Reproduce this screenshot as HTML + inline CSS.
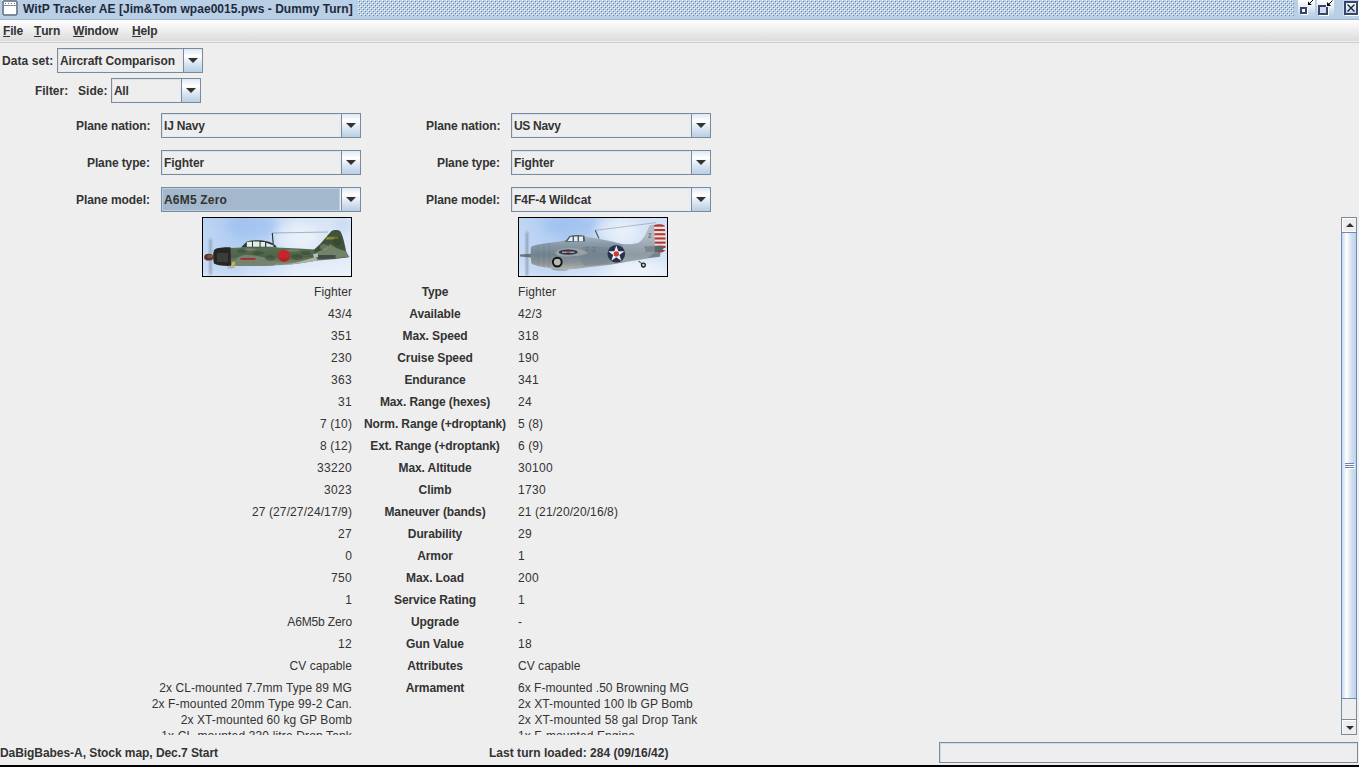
<!DOCTYPE html>
<html>
<head>
<meta charset="utf-8">
<title>WitP Tracker AE</title>
<style>
*{box-sizing:border-box;margin:0;padding:0}
html,body{width:1359px;height:767px;overflow:hidden;background:#eeeeee}
body{position:relative;font-family:"Liberation Sans",sans-serif;font-size:12px;color:#333333;line-height:14px}
.abs{position:absolute}
b,.b{font-weight:bold}
/* title bar */
#title{position:absolute;left:0;top:0;width:1359px;height:20px;background:#b8cfe5;border-bottom:1px solid #9fb4cd}
#title .txt{position:absolute;left:23px;top:2px;font-weight:bold;font-size:12px;line-height:14px;color:#1e2a3c;white-space:nowrap;letter-spacing:0.043px}
#bumps{position:absolute;left:358px;top:0;width:936px;height:16px}
/* menu */
#menu{position:absolute;left:0;top:20px;width:1359px;height:23px;background:linear-gradient(#ffffff 0px,#dcdcdc 21px,#eeeeee 21px,#eeeeee 22px);border-bottom:1px solid #cccccc}
#menu span{position:absolute;top:4px;font-weight:bold;white-space:nowrap;letter-spacing:-0.15px}
#menu u{text-decoration:none;display:inline-block;position:relative}
#menu u:after{content:"";position:absolute;left:0;right:0;top:12px;height:1px;background:#333}
/* labels */
.lbl{position:absolute;font-weight:bold;white-space:nowrap;line-height:14px}
/* combo */
.combo{position:absolute;height:25px;border:1px solid #7a8a99;background:#eeeeee}
.combo .in{position:absolute;left:0;top:0;right:20px;bottom:0;border:1px solid #d6e3f1;border-right-color:#e3ebf4;border-bottom-color:#e3ebf4}
.combo.sel .in{background:#a3b8cc;border-color:#b8cfe5}
.combo .t{position:absolute;left:2px;top:5px;font-weight:bold;white-space:nowrap;line-height:14px}
.combo .btn{position:absolute;right:0;top:0;width:19px;bottom:0;border-left:1px solid #7a8a99;background:linear-gradient(#dde8f3 0%,#ffffff 30%,#dde8f3 60%,#b8cfe5 100%)}
.combo .btn svg{position:absolute;left:4px;top:9px}
/* data rows */
.row{position:absolute;left:0;width:1340px;height:22px;line-height:22px;white-space:nowrap}
.l{position:absolute;right:988px;text-align:right;white-space:nowrap}
.c{position:absolute;left:335px;width:200px;text-align:center;font-weight:bold;white-space:nowrap}
.r{position:absolute;left:518px;white-space:nowrap}
.row.arm{height:16px;line-height:16px}
#view{position:absolute;left:0;top:212px;width:1340px;height:523px;overflow:hidden}
.pic{position:absolute;width:150px;height:60px;border:1px solid #000;overflow:hidden}
</style>
</head>
<body>
<div id="title">
  <svg class="abs" style="left:2px;top:0" width="16" height="16" viewBox="0 0 16 16"><rect x="0" y="0" width="16" height="16" fill="#7a8a99"/><rect x="2" y="2" width="12" height="12" fill="#fff"/><rect x="2" y="5" width="12" height="1" fill="#7a8a99"/><rect x="3" y="3" width="1" height="1" fill="#5f6f80"/><rect x="6" y="3" width="1" height="1" fill="#5f6f80"/><rect x="9" y="3" width="1" height="1" fill="#5f6f80"/><rect x="12" y="3" width="1" height="1" fill="#5f6f80"/><rect x="0" y="0" width="1" height="1" fill="#e8eef6"/><rect x="15" y="0" width="1" height="1" fill="#e8eef6"/><rect x="0" y="15" width="1" height="1" fill="#e8eef6"/><rect x="15" y="15" width="1" height="1" fill="#e8eef6"/></svg>
  <div class="txt">WitP Tracker AE [Jim&amp;Tom wpae0015.pws - Dummy Turn]</div>
  <svg id="bumps" width="936" height="16"><defs><pattern id="bp" x="0" y="0" width="4" height="4" patternUnits="userSpaceOnUse"><rect x="0" y="0" width="1" height="1" fill="#ffffff"/><rect x="1" y="1" width="1" height="1" fill="#6a84aa"/><rect x="2" y="2" width="1" height="1" fill="#ffffff"/><rect x="3" y="3" width="1" height="1" fill="#6a84aa"/></pattern></defs><rect width="936" height="16" fill="url(#bp)"/></svg>
  <svg class="abs" style="left:1296px;top:0" width="63" height="19" viewBox="1296 0 63 19">
    <defs><linearGradient id="tg" x1="0" y1="0" x2="0" y2="1"><stop offset="0" stop-color="#ffffff"/><stop offset="0.45" stop-color="#e4edf6"/><stop offset="1" stop-color="#b8cfe5"/></linearGradient></defs>
    <rect x="1298" y="0" width="17" height="16" fill="url(#tg)"/>
    <rect x="1317" y="0" width="17" height="16" fill="url(#tg)"/>
    <rect x="1301" y="8" width="7" height="7" fill="#ffffff"/>
    <rect x="1300" y="7" width="7" height="7" fill="#36456a"/>
    <rect x="1302" y="9" width="3" height="3" fill="#f4f7fb"/>
    <path d="M1308 1.5 V5 H1311.8 Z" fill="#000"/><path d="M1309.5 3.5 L1313 0" stroke="#000" stroke-width="1" fill="none"/>
    <rect x="1319" y="15" width="10" height="1" fill="#ffffff"/><rect x="1328" y="8" width="1" height="8" fill="#ffffff"/>
    <rect x="1320" y="7" width="6" height="6" fill="#d6dcee"/>
    <path d="M1318 5 H1326 V7 H1320 V13 H1326 V7 H1328 V15 H1318 Z" fill="#36456a"/>
    <path d="M1327 2 V6 H1331.2 Z" fill="#000"/><path d="M1328.5 4.5 L1332.5 0.5" stroke="#000" stroke-width="1" fill="none"/>
    <rect x="1343" y="1" width="16" height="15" fill="#dfe9f4" opacity="0.6"/>
    <rect x="1345" y="2" width="14" height="14" fill="#ffffff"/>
    <rect x="1345" y="2" width="12" height="12" fill="url(#tg)" stroke="#36456a" stroke-width="2"/>
    <path d="M1347.5 4.5 L1354.5 11.5 M1354.5 4.5 L1347.5 11.5" stroke="#161f36" stroke-width="1.3" fill="none"/>
  </svg>
</div>
<div id="menu">
  <span style="left:3px"><u>F</u>ile</span>
  <span style="left:34px"><u>T</u>urn</span>
  <span style="left:73px"><u>W</u>indow</span>
  <span style="left:132px"><u>H</u>elp</span>
</div>

<div class="lbl" style="left:2px;top:54px;letter-spacing:0.075px">Data set:</div>
<div class="combo" style="left:57px;top:48px;width:146px"><div class="in"></div><div class="t" style="letter-spacing:-0.056px">Aircraft Comparison</div><div class="btn"><svg width="10" height="5"><path d="M0 0H10L5 5Z" fill="#333"/></svg></div></div>

<div class="lbl" style="left:35px;top:84px;letter-spacing:-0.033px">Filter:</div>
<div class="lbl" style="left:78px;top:84px;letter-spacing:0.05px">Side:</div>
<div class="combo" style="left:111px;top:78px;width:90px"><div class="in"></div><div class="t" style="letter-spacing:-0.3px">All</div><div class="btn"><svg width="10" height="5"><path d="M0 0H10L5 5Z" fill="#333"/></svg></div></div>

<div class="lbl" style="left:76px;top:119px;letter-spacing:-0.063px">Plane nation:</div>
<div class="combo" style="left:161px;top:113px;width:200px"><div class="in"></div><div class="t" style="letter-spacing:-0.167px">IJ Navy</div><div class="btn"><svg width="10" height="5"><path d="M0 0H10L5 5Z" fill="#333"/></svg></div></div>
<div class="lbl" style="left:87px;top:156px;letter-spacing:-0.11px">Plane type:</div>
<div class="combo" style="left:161px;top:150px;width:200px"><div class="in"></div><div class="t" style="letter-spacing:-0.067px">Fighter</div><div class="btn"><svg width="10" height="5"><path d="M0 0H10L5 5Z" fill="#333"/></svg></div></div>
<div class="lbl" style="left:76px;top:193px;letter-spacing:-0.071px">Plane model:</div>
<div class="combo sel" style="left:161px;top:187px;width:200px"><div class="in"></div><div class="t" style="letter-spacing:0.2px">A6M5 Zero</div><div class="btn"><svg width="10" height="5"><path d="M0 0H10L5 5Z" fill="#333"/></svg></div></div>

<div class="lbl" style="left:426px;top:119px;letter-spacing:-0.063px">Plane nation:</div>
<div class="combo" style="left:511px;top:113px;width:200px"><div class="in"></div><div class="t" style="letter-spacing:-0.3px">US Navy</div><div class="btn"><svg width="10" height="5"><path d="M0 0H10L5 5Z" fill="#333"/></svg></div></div>
<div class="lbl" style="left:437px;top:156px;letter-spacing:-0.11px">Plane type:</div>
<div class="combo" style="left:511px;top:150px;width:200px"><div class="in"></div><div class="t" style="letter-spacing:-0.067px">Fighter</div><div class="btn"><svg width="10" height="5"><path d="M0 0H10L5 5Z" fill="#333"/></svg></div></div>
<div class="lbl" style="left:426px;top:193px;letter-spacing:-0.071px">Plane model:</div>
<div class="combo" style="left:511px;top:187px;width:200px"><div class="in"></div><div class="t" style="letter-spacing:-0.05px">F4F-4 Wildcat</div><div class="btn"><svg width="10" height="5"><path d="M0 0H10L5 5Z" fill="#333"/></svg></div></div>

<div id="view">
  <div class="pic" id="pic1" style="left:202px;top:5px;background:#bcd4f0"><svg class="abs" style="left:0;top:0" width="148" height="58" viewBox="1 1 148 58">
<defs>
<linearGradient id="sk1" x1="0" y1="0" x2="1" y2="0"><stop offset="0" stop-color="#bcd4f3"/><stop offset="0.25" stop-color="#a9c8f1"/><stop offset="0.42" stop-color="#b3cff3"/><stop offset="0.62" stop-color="#d3e2f6"/><stop offset="1" stop-color="#dde8f6"/></linearGradient>
<linearGradient id="sk1b" x1="0" y1="0" x2="0" y2="1"><stop offset="0" stop-color="#fff" stop-opacity="0"/><stop offset="0.65" stop-color="#fff" stop-opacity="0.12"/><stop offset="1" stop-color="#fff" stop-opacity="0.5"/></linearGradient>
<linearGradient id="zf" x1="0" y1="0" x2="0" y2="1"><stop offset="0" stop-color="#5a6f53"/><stop offset="0.5" stop-color="#4e6348"/><stop offset="1" stop-color="#8a9585"/></linearGradient>
<filter id="bl1" x="-5%" y="-5%" width="110%" height="110%"><feGaussianBlur stdDeviation="0.45"/></filter>
<filter id="bl3" x="-30%" y="-30%" width="160%" height="160%"><feGaussianBlur stdDeviation="4"/></filter>
<filter id="bl2" x="-150%" y="-10%" width="400%" height="120%"><feGaussianBlur stdDeviation="0.8 1.5"/></filter>
</defs>
<rect x="0" y="0" width="150" height="60" fill="url(#sk1)"/>
<rect x="0" y="0" width="150" height="60" fill="url(#sk1b)"/>
<g filter="url(#bl3)"><ellipse cx="50" cy="9" rx="26" ry="11" fill="#9bbdee" opacity="0.55"/><ellipse cx="95" cy="20" rx="22" ry="15" fill="#ffffff" opacity="0.4"/><ellipse cx="142" cy="8" rx="10" ry="8" fill="#b9d2f2" opacity="0.5"/><ellipse cx="20" cy="52" rx="22" ry="7" fill="#b5cff2" opacity="0.5"/></g>
<g filter="url(#bl1)">
<!-- antenna wire & mast -->
<path d="M70.5 16 L126 15" stroke="#4a5a58" stroke-width="0.4" fill="none"/>
<path d="M70.3 16 L71.2 27" stroke="#22302f" stroke-width="1.1" fill="none"/>
<!-- fuselage -->
<path d="M28 31 C40 30 60 30 74 30.5 C90 31 104 32 112 32.5 L113 36 L147 40 L134 42 L116 43.5 C106 45 98 46.5 88 47.5 C70 49 45 49 28 48.5 Z" fill="url(#zf)"/>
<!-- fin -->
<path d="M111.5 33 C118 28 124 20 129 14.5 C132 12.5 136 12.8 138.5 14.5 C141 19 143 28 144 34 C145 37 146.5 39 147.5 40 L140 41 L113 37 Z" fill="#3f5238"/>
<path d="M113 36 C120 33 126 30 128 27 C132 30 136 32 143.5 34 L147 40 L134 41 L116 40 Z" fill="#6f8268"/>
<path d="M124.5 20 L136 19.5 L136.5 22 L124 22.8 Z" fill="#8a8a3a"/>
<!-- stabilizer -->
<path d="M113 38 L133.5 38 L133.5 41.5 L117 42 Z" fill="#454b46"/>
<path d="M111 37 L116 36.5 L116 40 L112 41 Z" fill="#b9c0b6"/>
<!-- underside light -->
<path d="M88 47.6 C98 46.5 106 45 116 43.4 L113.5 40 C104 42.5 96 45.5 86 47 Z" fill="#a9b2a6"/>
<!-- canopy -->
<path d="M39 30.6 L45 24.2 C52 22.6 60 23 66 24.5 C70 25.6 73.5 27.8 75 30.6 Z" fill="#2c3a33"/>
<path d="M44.8 29.8 V24.8 H50 V29.8 Z M51 29.8 V24.6 H57.5 V29.8 Z M58.6 29.8 V25 H63 V29.8 Z M64.2 29.8 V25.8 L71.5 28.6 V29.8 Z" fill="#e7ebe8"/>
<!-- cowl -->
<path d="M12 33 C14 31 20 30 28.5 30.3 L29 48.8 C22 49.2 15 48.5 12 46.5 C10.8 42 10.8 37 12 33 Z" fill="#252726"/>
<path d="M15 36 H26 V45 H15 Z" fill="#454845" opacity="0.7"/>
<!-- spinner -->
<ellipse cx="6.8" cy="40.2" rx="4.6" ry="3.4" fill="#5f3326"/>
<ellipse cx="8" cy="39.4" rx="3" ry="1.4" fill="#9a6a52" opacity="0.7"/>
<!-- wing -->
<path d="M31 47 C33 42 37 38.5 43 38 C55 37.6 66 40.5 74 45.5 L72 48.5 C60 49.2 45 49.2 31 48.8 Z" fill="#74826f"/>
<path d="M38.5 41 H53.5 V42.8 H38.5 Z" fill="#a82b2b"/>
<path d="M30 45 L33 44.5 L33 48.5 L30 48.5 Z" fill="#c9b43a"/>
<path d="M25.5 49 L33 49 L32 51.2 L25.5 51.5 Z" fill="#aab3ae"/>
<g opacity="0.45" fill="#33452f"><ellipse cx="40" cy="34" rx="5" ry="2"/><ellipse cx="56" cy="36" rx="6" ry="2.2"/><ellipse cx="68" cy="41" rx="5" ry="3"/><ellipse cx="95" cy="40" rx="6" ry="3"/><ellipse cx="104" cy="36" rx="5" ry="2"/><ellipse cx="135" cy="24" rx="4" ry="5"/></g>
<g opacity="0.5" fill="#8a9a82"><ellipse cx="48" cy="32.5" rx="6" ry="1.2"/><ellipse cx="90" cy="33.5" rx="8" ry="1.2"/><ellipse cx="122" cy="30" rx="4" ry="3"/></g>
<!-- hinomaru -->
<circle cx="82" cy="38.8" r="6.1" fill="#c4282b"/><path d="M76.2 40.5 A6.1 6.1 0 0 0 87.8 40.5 Z" fill="#a82226" opacity="0.6"/>
</g>
<!-- prop blur -->
<rect x="7.6" y="22" width="1.8" height="36" fill="#4d5866" opacity="0.55" filter="url(#bl2)"/>
</svg></div>
  <div class="pic" id="pic2" style="left:518px;top:5px;background:#bcd4f0"><svg class="abs" style="left:0;top:0" width="148" height="58" viewBox="1 1 148 58">
<defs>
<linearGradient id="sk2" x1="0" y1="0" x2="1" y2="0"><stop offset="0" stop-color="#bfd6f3"/><stop offset="0.3" stop-color="#a8c8f1"/><stop offset="0.5" stop-color="#b4d0f3"/><stop offset="0.68" stop-color="#d6e4f6"/><stop offset="1" stop-color="#cfdff5"/></linearGradient>
<linearGradient id="wf" gradientUnits="userSpaceOnUse" x1="0" y1="19" x2="0" y2="53"><stop offset="0" stop-color="#a9b6c0"/><stop offset="0.22" stop-color="#8a9baa"/><stop offset="0.55" stop-color="#71838f"/><stop offset="0.8" stop-color="#8d9597"/><stop offset="1" stop-color="#b7b8b2"/></linearGradient>
<clipPath id="rud"><path d="M136 8.3 C139 6.8 144 6.8 146.5 8.5 C147.6 16 147.8 28 147.3 33 C146 35.5 141 36.5 137 35 Z"/></clipPath>
</defs>
<rect x="0" y="0" width="150" height="60" fill="url(#sk2)"/>
<rect x="0" y="0" width="150" height="60" fill="url(#sk1b)"/>
<g filter="url(#bl3)"><ellipse cx="52" cy="8" rx="28" ry="11" fill="#9bbdee" opacity="0.55"/><ellipse cx="100" cy="14" rx="22" ry="11" fill="#ffffff" opacity="0.4"/><ellipse cx="25" cy="53" rx="24" ry="6" fill="#b5cff2" opacity="0.5"/><ellipse cx="120" cy="52" rx="26" ry="7" fill="#ffffff" opacity="0.35"/></g>
<g filter="url(#bl1)">
<!-- wire & mast -->
<path d="M77.4 13.4 L138 5.6" stroke="#7d8890" stroke-width="0.5" fill="none"/>
<path d="M77.2 13.2 L81 21.5" stroke="#4a545c" stroke-width="1.1" fill="none"/>
<!-- fuselage + fin -->
<path d="M13 30 C14 28.5 20 27.2 30 26 C38 25 44 24.5 47 23.2 L66 19.5 C80 21 94 24.5 105 27.2 C112 27.6 118 27 121 25.5 C125.5 23 128.5 15 132 8.2 L137 7.8 L138 35 L142.5 35.5 L142 39.7 L130 41.3 C120 43 112 44.5 105 45.5 C94 47.5 82 49 72 50 C62 51.5 55 52.3 49 52.2 C42 52.3 36 51.6 32 51 C24 50 16 48.5 13.5 46.5 C12.5 41 12.5 35 13 30 Z" fill="url(#wf)"/>
<!-- rudder stripes -->
<g clip-path="url(#rud)"><rect x="135" y="7" width="14" height="30" fill="#ebe6e4"/>
<rect x="135" y="6.5" width="14" height="3.2" fill="#b23535"/><rect x="135" y="12" width="14" height="2.1" fill="#b23535"/><rect x="135" y="16.2" width="14" height="2.1" fill="#b23535"/><rect x="135" y="20.4" width="14" height="2.1" fill="#b23535"/><rect x="135" y="24.6" width="14" height="2.1" fill="#b23535"/><rect x="135" y="28.8" width="14" height="2.1" fill="#a53232"/><rect x="135" y="33" width="14" height="3.5" fill="#a53232"/></g>
<!-- stabilizer -->
<path d="M126 29.4 L144 28.6 L146 31 L143 34.6 L128 35.2 Z" fill="#5b656b"/>
<!-- fin "2" -->
<text x="130" y="21.4" font-family="Liberation Sans, sans-serif" font-size="6.5" font-weight="bold" fill="#39434d">2</text>
<!-- canopy -->
<path d="M47 24.8 L51.5 19 C56 17.6 62 17.6 66.5 18.8 L67 24.6 Z" fill="#4d5a64"/>
<path d="M49.5 24 L52.6 19.8 H54.6 V24 Z M56 24.2 V19.4 H59.6 V24.2 Z M61 24.3 V19.6 H65 V24.3 Z" fill="#e9ecec"/>
<!-- cowl front shade -->
<path d="M20 27.6 V49.2 M26 26.6 V50.2 M31 25.9 V50.8" stroke="#5f707d" stroke-width="0.5" opacity="0.7" fill="none"/>
<!-- shadow band mid -->
<path d="M64 30 C72 29 84 29.5 92 31 L92 46 C84 47.5 74 48.5 66 49 C62 44 61 36 64 30 Z" fill="#74838f" opacity="0.55"/>
<!-- wing -->
<path d="M37 36 C39 32 44 31 52 31 C60 31 66 33 70 36 C66 38.5 56 39.5 48 39.5 C42 39.5 38 38.5 37 36 Z" fill="#9aa1a3"/>
<ellipse cx="50.2" cy="35.2" rx="9.4" ry="2.6" fill="#2b3448"/>
<path d="M44 35.2 H56.5" stroke="#e6e6e6" stroke-width="0.9"/><rect x="48.6" y="34.4" width="3.2" height="1.6" fill="#c03a3a"/>
<!-- F-2 -->
<text x="67.8" y="34.8" font-family="Liberation Sans, sans-serif" font-size="6.5" fill="#65707a">F-2</text>
<!-- wheel -->
<circle cx="39.3" cy="45.1" r="4.4" fill="#b9b9b6" stroke="#101214" stroke-width="1.9"/>
<!-- belly -->
<path d="M33 51 C38 52 44 52.4 49 52.2 L51 53 C46 54.2 38 53.8 34 52.5 Z" fill="#9aa0a0"/>
<!-- hub -->
<path d="M2 37.6 L13 36.8 L13 40.6 L2 39.6 Z" fill="#70767c"/>
<path d="M105 27.4 C112 27.6 118 27 121 25.5 C125.5 23 128.5 15 132 8.8 L136 8.6 L137 35 L130 41 C120 43 112 44.5 105 45.5 Z" fill="#c3c9cc" opacity="0.35"/>
<!-- roundel -->
<circle cx="98.3" cy="36.8" r="8.8" fill="#25334f"/>
<path d="M98.3 28.4 L100.3 34.2 L106.4 34.2 L101.4 37.9 L103.3 43.8 L98.3 40.2 L93.3 43.8 L95.2 37.9 L90.2 34.2 L96.3 34.2 Z" fill="#f2f2f2"/>
<circle cx="98.3" cy="36.9" r="2.7" fill="#cf3b35"/>
<!-- tail wheel -->
<path d="M120.5 44 L125 47.5" stroke="#6a7378" stroke-width="1.3"/>
<circle cx="125.4" cy="48.1" r="1.9" fill="#cfd6dc" stroke="#1c2024" stroke-width="1.3"/>
</g>
<rect x="8" y="15" width="1.8" height="44" fill="#4f5b6e" opacity="0.6" filter="url(#bl2)"/>
</svg></div>
  <div class="row" style="top:69px"><span class="l" style="letter-spacing:0.093px">Fighter</span><span class="c" style="letter-spacing:-0.1px">Type</span><span class="r" style="letter-spacing:0.093px">Fighter</span></div>
  <div class="row" style="top:91px"><span class="l" style="letter-spacing:0.161px">43/4</span><span class="c" style="letter-spacing:-0.1px">Available</span><span class="r" style="letter-spacing:0.161px">42/3</span></div>
  <div class="row" style="top:113px"><span class="l" style="letter-spacing:0.326px">351</span><span class="c" style="letter-spacing:-0.1px">Max. Speed</span><span class="r" style="letter-spacing:0.326px">318</span></div>
  <div class="row" style="top:135px"><span class="l" style="letter-spacing:0.326px">230</span><span class="c" style="letter-spacing:-0.1px">Cruise Speed</span><span class="r" style="letter-spacing:0.326px">190</span></div>
  <div class="row" style="top:157px"><span class="l" style="letter-spacing:0.326px">363</span><span class="c" style="letter-spacing:-0.1px">Endurance</span><span class="r" style="letter-spacing:0.326px">341</span></div>
  <div class="row" style="top:179px"><span class="l" style="letter-spacing:0.326px">31</span><span class="c" style="letter-spacing:-0.1px">Max. Range (hexes)</span><span class="r" style="letter-spacing:0.326px">24</span></div>
  <div class="row" style="top:201px"><span class="l" style="letter-spacing:0.109px">7 (10)</span><span class="c" style="letter-spacing:-0.1px">Norm. Range (+droptank)</span><span class="r" style="letter-spacing:0.065px">5 (8)</span></div>
  <div class="row" style="top:223px"><span class="l" style="letter-spacing:0.109px">8 (12)</span><span class="c" style="letter-spacing:-0.1px">Ext. Range (+droptank)</span><span class="r" style="letter-spacing:0.065px">6 (9)</span></div>
  <div class="row" style="top:245px"><span class="l" style="letter-spacing:0.326px">33220</span><span class="c" style="letter-spacing:-0.1px">Max. Altitude</span><span class="r" style="letter-spacing:0.326px">30100</span></div>
  <div class="row" style="top:267px"><span class="l" style="letter-spacing:0.326px">3023</span><span class="c" style="letter-spacing:-0.1px">Climb</span><span class="r" style="letter-spacing:0.326px">1730</span></div>
  <div class="row" style="top:289px"><span class="l" style="letter-spacing:0.107px">27 (27/27/24/17/9)</span><span class="c" style="letter-spacing:-0.1px">Maneuver (bands)</span><span class="r" style="letter-spacing:0.107px">21 (21/20/20/16/8)</span></div>
  <div class="row" style="top:311px"><span class="l" style="letter-spacing:0.326px">27</span><span class="c" style="letter-spacing:-0.1px">Durability</span><span class="r" style="letter-spacing:0.326px">29</span></div>
  <div class="row" style="top:333px"><span class="l">0</span><span class="c" style="letter-spacing:-0.1px">Armor</span><span class="r">1</span></div>
  <div class="row" style="top:355px"><span class="l" style="letter-spacing:0.326px">750</span><span class="c" style="letter-spacing:-0.1px">Max. Load</span><span class="r" style="letter-spacing:0.326px">200</span></div>
  <div class="row" style="top:377px"><span class="l">1</span><span class="c" style="letter-spacing:-0.1px">Service Rating</span><span class="r">1</span></div>
  <div class="row" style="top:399px"><span class="l" style="letter-spacing:-0.133px">A6M5b Zero</span><span class="c" style="letter-spacing:-0.1px">Upgrade</span><span class="r">-</span></div>
  <div class="row" style="top:421px"><span class="l" style="letter-spacing:0.326px">12</span><span class="c" style="letter-spacing:-0.1px">Gun Value</span><span class="r" style="letter-spacing:0.326px">18</span></div>
  <div class="row" style="top:443px"><span class="l" style="letter-spacing:0.036px">CV capable</span><span class="c" style="letter-spacing:-0.1px">Attributes</span><span class="r" style="letter-spacing:0.036px">CV capable</span></div>
  <div class="row" style="top:465px"><span class="c" style="letter-spacing:-0.1px">Armament</span></div>
  <div class="row arm" style="top:468px"><span class="l" style="letter-spacing:0.075px">2x CL-mounted 7.7mm Type 89 MG</span><span class="r" style="letter-spacing:0.032px">6x F-mounted .50 Browning MG</span></div>
  <div class="row arm" style="top:484px"><span class="l" style="letter-spacing:0.138px">2x F-mounted 20mm Type 99-2 Can.</span><span class="r" style="letter-spacing:0.083px">2x XT-mounted 100 lb GP Bomb</span></div>
  <div class="row arm" style="top:500px"><span class="l" style="letter-spacing:0.074px">2x XT-mounted 60 kg GP Bomb</span><span class="r" style="letter-spacing:0.138px">2x XT-mounted 58 gal Drop Tank</span></div>
  <div class="row arm" style="top:516px"><span class="l" style="letter-spacing:0.148px">1x CL-mounted 330 litre Drop Tank</span><span class="r" style="letter-spacing:0.119px">1x F-mounted Engine</span></div>
</div>

<!-- scrollbar -->
<div class="abs" style="left:1340px;top:233px;width:1px;height:465px;background:#e9f0fa"></div><div class="abs" style="left:1357px;top:233px;width:1px;height:465px;background:#f2f6fc"></div>
<div id="sb" class="abs" style="left:1341px;top:217px;width:16px;height:518px">
  <div class="abs" style="left:0;top:0;width:16px;height:518px;border:1px solid #7a8a99;border-top:none;border-bottom:none;background:#eeeeee"></div>
  <div class="abs" style="left:0;top:0;width:16px;height:15px;border-top:1px solid #7a8a99;border-left:1px solid #7a8a99;border-right:1px solid #7a8a99;background:#eeeeee"><div class="abs" style="left:0;top:0;width:14px;height:14px;border-top:1px solid #fff;border-left:1px solid #fff;border-bottom:1px solid #fff"></div><svg class="abs" style="left:4px;top:5px" width="8" height="4"><path d="M0 4H8L4 0Z" fill="#333"/></svg></div>
  <div class="abs" style="left:0;top:15px;width:16px;height:467px;border:1px solid #6382bf;border-color:#7189b5;background:linear-gradient(90deg,#c6d8ee 0%,#ffffff 32%,#dbe6f3 60%,#bdd1e8 100%)">
    <div class="abs" style="left:3px;top:230px;width:9px;height:1px;background:#6b83ad"></div><div class="abs" style="left:4px;top:231px;width:9px;height:1px;background:#fff"></div>
    <div class="abs" style="left:3px;top:232px;width:9px;height:1px;background:#6b83ad"></div><div class="abs" style="left:4px;top:233px;width:9px;height:1px;background:#fff"></div>
    <div class="abs" style="left:3px;top:234px;width:9px;height:1px;background:#6b83ad"></div><div class="abs" style="left:4px;top:235px;width:9px;height:1px;background:#fff"></div>
  </div>
  <div class="abs" style="left:0;top:502px;width:16px;height:16px;border:1px solid #7a8a99;background:#eeeeee"><div class="abs" style="left:0;top:0;width:14px;height:14px;border-top:1px solid #fff;border-left:1px solid #fff"></div><svg class="abs" style="left:4px;top:6px" width="8" height="4"><path d="M0 0H8L4 4Z" fill="#333"/></svg></div>
</div>

<!-- status -->
<div class="lbl" style="left:0px;top:746px;letter-spacing:-0.059px">DaBigBabes-A, Stock map, Dec.7 Start</div>
<div class="lbl" style="left:489px;top:746px;letter-spacing:0.023px">Last turn loaded: 284 (09/16/42)</div>
<div class="abs" style="left:939px;top:742px;width:419px;height:21px;border:1px solid #7a8a99;background:#eeeeee"><div class="abs" style="left:0;top:0;right:0;bottom:0;border-top:1px solid #c8ddf2;border-left:1px solid #c8ddf2"></div></div>
<div class="abs" style="left:0;top:765px;width:1359px;height:2px;background:#000"></div>
</body>
</html>
